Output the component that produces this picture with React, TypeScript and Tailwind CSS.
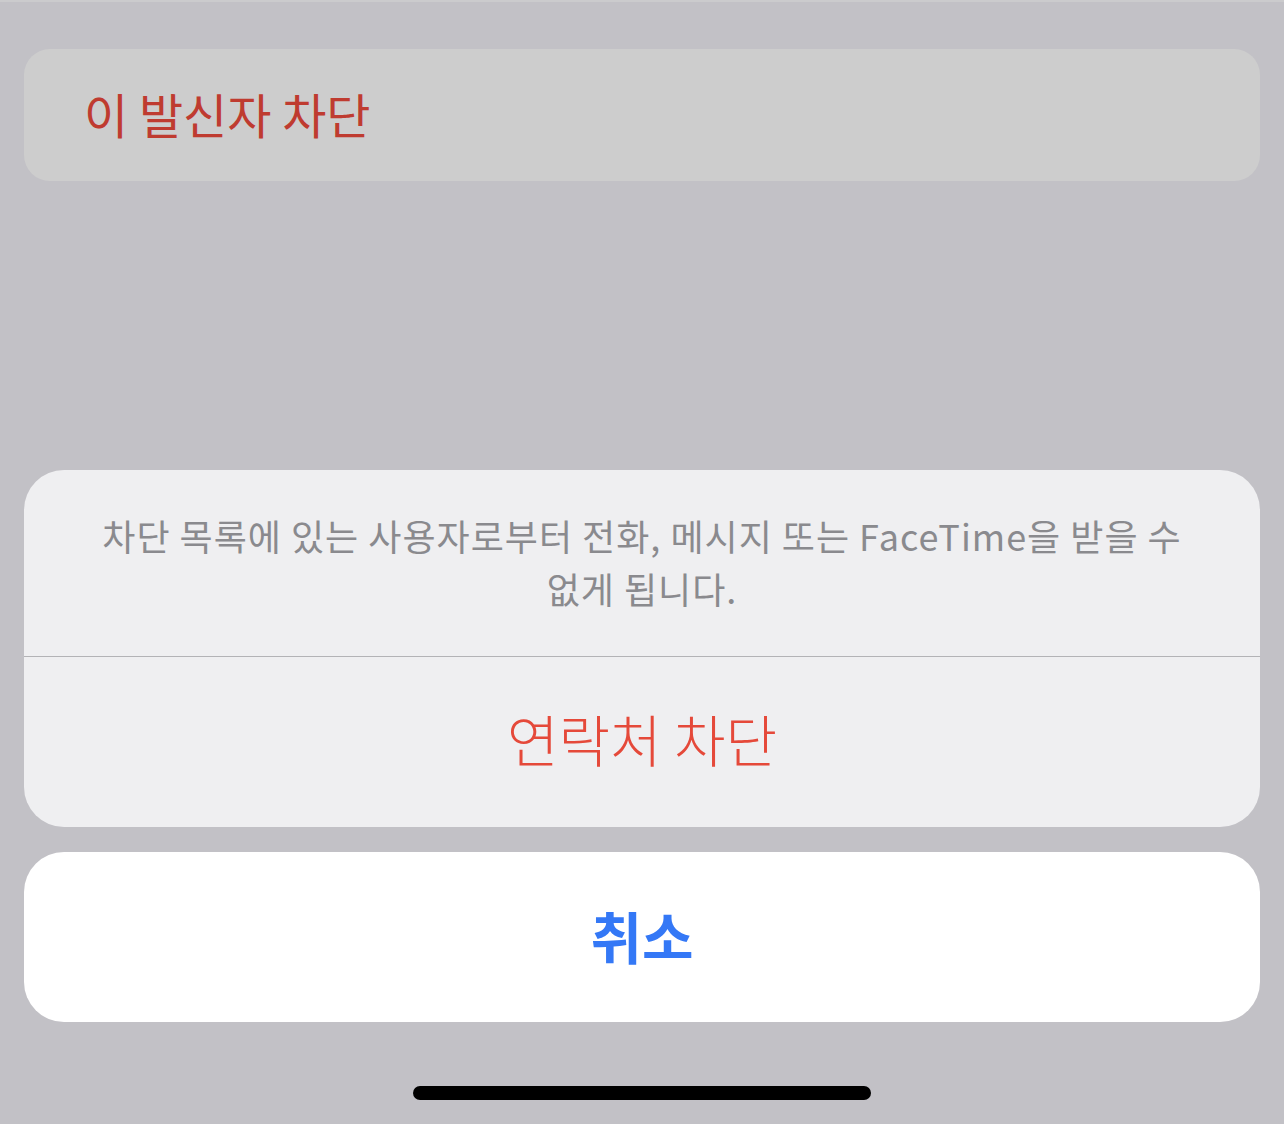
import React from 'react';

const font = { fontFamily: '"Noto Sans CJK KR", "Noto Sans", sans-serif' };

export default function App() {
  return (
    <div className="w-[1284px] h-[1124px] bg-[#c2c1c6] flex flex-col overflow-hidden" style={font}>
      <div className="h-[2px] bg-[#cbcbcd]" />
      <div className="px-6 pt-[47px]">
        <div className="h-[132px] rounded-[26px] bg-[#cdcdcd] flex items-center pl-[60px]">
          <span className="text-[48px] leading-none text-[#bf3b30] pb-[4px]">이 발신자 차단</span>
        </div>
      </div>

      <div className="px-6 pt-[289px]">
        <div className="rounded-[40px] bg-[#efeff1] overflow-hidden">
          <div className="h-[186px] flex items-center justify-center px-[20px] pb-[2px]">
            <p className="text-center text-[36px] leading-[53px] tracking-[1px] text-[#8a8a8e]">
              차단 목록에 있는 사용자로부터 전화, 메시지 또는 FaceTime을 받을 수<br />
              없게 됩니다.
            </p>
          </div>
          <div className="h-px bg-[#b3b3b6]" />
          <button className="w-full h-[170px] flex items-center justify-center">
            <span className="text-[56px] leading-none text-[#e5493a] font-light pb-[8px]">연락처 차단</span>
          </button>
        </div>
      </div>

      <div className="px-6 pt-[25px]">
        <button className="w-full h-[170px] rounded-[40px] bg-white flex items-center justify-center">
          <span className="text-[56px] leading-none text-[#3478f6] font-semibold pb-[4px]">취소</span>
        </button>
      </div>

      <div className="flex justify-center pt-[64px]">
        <div className="w-[458px] h-[14px] rounded-full bg-black" />
      </div>
    </div>
  );
}
